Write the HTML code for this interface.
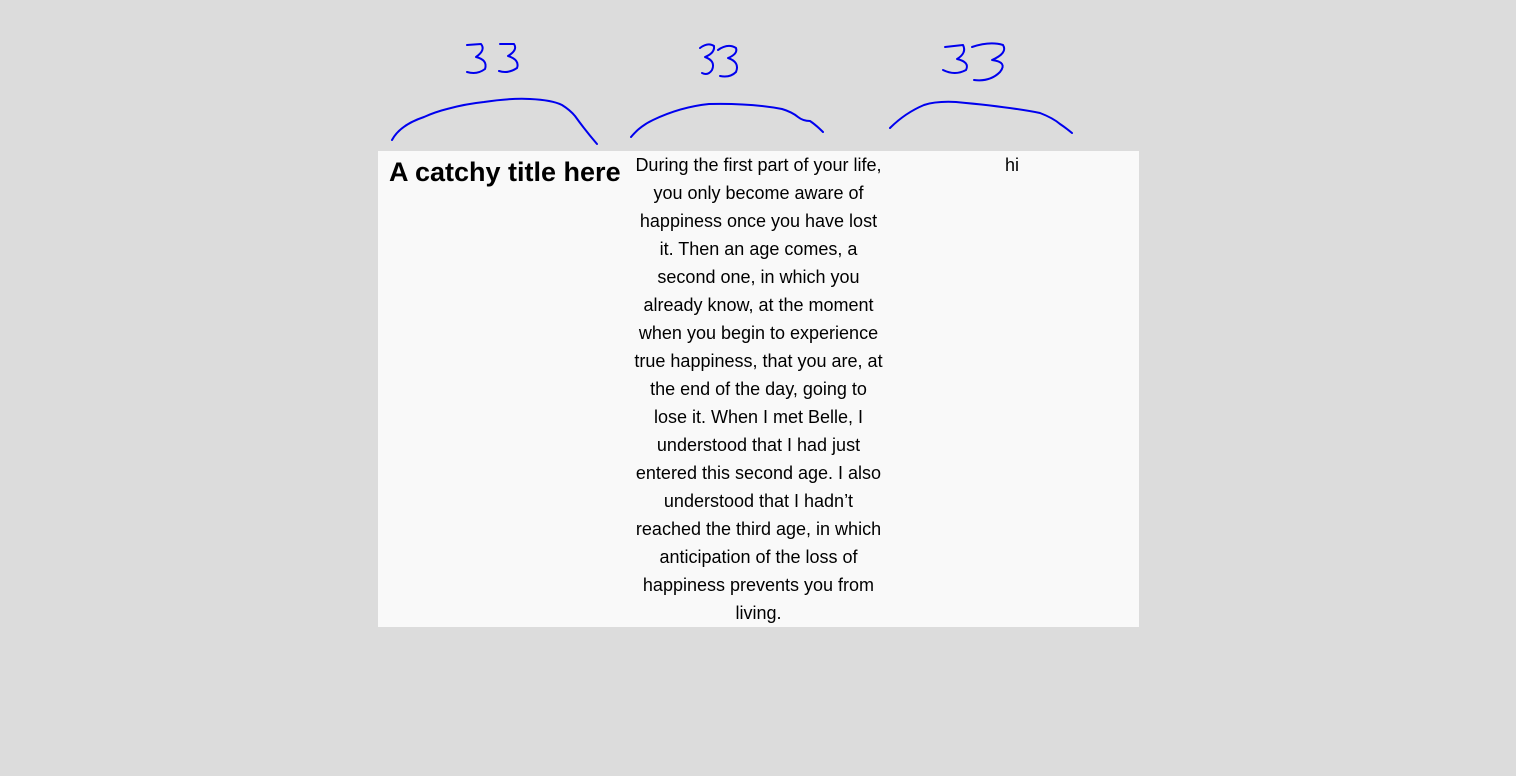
<!DOCTYPE html>
<html><head><style>
html,body{margin:0;padding:0;background:#dcdcdc;width:1516px;height:776px;overflow:hidden;font-family:"Liberation Sans",Arial,sans-serif;color:#000}
.box{position:absolute;left:378px;top:151px;width:761px;height:476px;background:#f9f9f9}
.title{position:absolute;left:389px;top:155px;font-size:27px;font-weight:bold;line-height:34px;white-space:nowrap}
.mid{position:absolute;left:632px;top:151px;width:253px;text-align:center;font-size:18px;line-height:28px;white-space:nowrap}
.hi{position:absolute;left:885px;top:151px;width:254px;text-align:center;font-size:18px;line-height:28px}
svg{position:absolute;left:0;top:0}
</style></head><body>
<div class="box"></div>
<div class="title">A catchy title here</div>
<div class="mid">During the first part of your life,<br>you only become aware of<br>happiness once you have lost<br>it. Then an age comes, a<br>second one, in which you<br>already know, at the moment<br>when you begin to experience<br>true happiness, that you are, at<br>the end of the day, going to<br>lose it. When I met Belle, I<br>understood that I had just<br>entered this second age. I also<br>understood that I hadn’t<br>reached the third age, in which<br>anticipation of the loss of<br>happiness prevents you from<br>living.</div>
<div class="hi">hi</div>
<svg width="1516" height="200" fill="none" stroke="#0000ee" stroke-width="2" stroke-linecap="round" stroke-linejoin="round">
<path d="M392,140 Q400,125 424,117 Q435,112 447,109 Q465,104 484,102 Q510,98 530,99 Q552,100 562,105 Q570,110 575,116 Q585,130 597,144"/>
<path d="M631,137 Q640,126 653,120 Q680,107 709,104 Q750,103 782,109 Q792,112 798,117 Q803,121 810,121 Q816,125 823,132"/>
<path d="M890,128 Q905,113 924,105 Q936,101 956,102 Q1010,107 1040,113 Q1053,118 1060,124 Q1066,128 1072,133"/>
<path d="M467,45 L481,44 Q486,50 476,57 Q488,60 485,69 Q477,75 467,72"/>
<path d="M500,44 L514,44 Q518,50 508,56 Q520,60 517,68 Q508,74 499,71"/>
<path d="M700,48 Q708,42 714,46 Q715,53 705,57 Q716,61 712,70 Q708,76 702,73"/>
<path d="M718,50 Q728,43 736,48 Q738,54 728,58 Q740,62 736,72 Q730,78 720,76"/>
<path d="M945,47 L963,45 Q967,53 957,59 Q970,62 966,70 Q955,76 943,70"/>
<path d="M972,47 Q990,41 1003,45 Q1008,53 992,60 Q1008,62 1000,72 Q990,82 974,80"/>
</svg>
</body></html>
